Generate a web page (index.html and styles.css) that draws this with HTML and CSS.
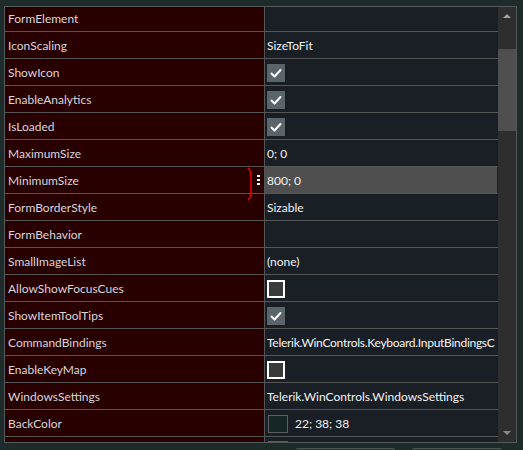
FILE: index.html
```html
<!DOCTYPE html>
<html>
<head>
<meta charset="utf-8">
<link rel="stylesheet" href="styles.css">
</head>
<body>
<div class="panel">
  <div class="grid">
    <div class="rows">
      <div class="row"><div class="name">FormElement</div><div class="value"></div></div>
      <div class="row"><div class="name">IconScaling</div><div class="value">SizeToFit</div></div>
      <div class="row"><div class="name">ShowIcon</div><div class="value"><span class="check on"><svg viewBox="0 0 18 18"><path d="M4.5 9.5 L7.5 12.5 L13.5 6" /></svg></span></div></div>
      <div class="row"><div class="name">EnableAnalytics</div><div class="value"><span class="check on"><svg viewBox="0 0 18 18"><path d="M4.5 9.5 L7.5 12.5 L13.5 6" /></svg></span></div></div>
      <div class="row"><div class="name">IsLoaded</div><div class="value"><span class="check on"><svg viewBox="0 0 18 18"><path d="M4.5 9.5 L7.5 12.5 L13.5 6" /></svg></span></div></div>
      <div class="row"><div class="name">MaximumSize</div><div class="value">0; 0</div></div>
      <div class="row selected"><div class="name">MinimumSize<span class="dots"><i></i><i></i><i></i></span><svg class="mark" viewBox="0 0 8 34"><path d="M2 1 Q5 3 5 12 L5 24 Q5 31 2 33" /></svg></div><div class="value">800; 0</div></div>
      <div class="row"><div class="name">FormBorderStyle</div><div class="value">Sizable</div></div>
      <div class="row"><div class="name">FormBehavior</div><div class="value"></div></div>
      <div class="row"><div class="name">SmallImageList</div><div class="value">(none)</div></div>
      <div class="row"><div class="name">AllowShowFocusCues</div><div class="value"><span class="check off"></span></div></div>
      <div class="row"><div class="name">ShowItemToolTips</div><div class="value"><span class="check on"><svg viewBox="0 0 18 18"><path d="M4.5 9.5 L7.5 12.5 L13.5 6" /></svg></span></div></div>
      <div class="row"><div class="name">CommandBindings</div><div class="value"><span class="clip">Telerik.WinControls.Keyboard.InputBindingsC</span></div></div>
      <div class="row"><div class="name">EnableKeyMap</div><div class="value"><span class="check off"></span></div></div>
      <div class="row"><div class="name">WindowsSettings</div><div class="value">Telerik.WinControls.WindowsSettings</div></div>
      <div class="row"><div class="name">BackColor</div><div class="value"><span class="swatch"></span><span class="swatch-text">22; 38; 38</span></div></div>
      <div class="row partial"><div class="name"></div><div class="value top"><span class="swatch light"></span></div></div>
    </div>
  </div>
  <div class="scrollbar">
    <div class="sb-btn up"><span class="arrow-up"></span></div>
    <div class="sb-thumb"></div>
    <div class="sb-track"></div>
    <div class="sb-btn down"><span class="arrow-down"></span></div>
  </div>
</div>
<div class="footer">
  <div class="btn first"></div>
  <div class="btn second"></div>
</div>
</body>
</html>
```

FILE: styles.css
```css
html, body {
  margin: 0;
  padding: 0;
}
body {
  width: 523px;
  height: 450px;
  overflow: hidden;
  background: #1d2b2b;
  font-family: "Lato", "Noto Sans", sans-serif;
  font-size: 12px;
}
.panel {
  margin: 6px 0 0 4px;
  width: 511px;
  height: 435px;
  border: 1px solid #555a5a;
  display: flex;
  background: #1a1f26;
}
.grid {
  flex: 1;
  overflow: hidden;
}
.rows {
  margin-top: -2px;
}
.row {
  display: grid;
  grid-template-columns: 260px 232px;
  grid-template-rows: 26px;
  height: 26px;
  border-bottom: 1px solid #555555;
}
.name {
  position: relative;
  height: 26px;
  box-sizing: border-box;
  padding-top: 1px;
  background: #280000;
  border-right: 1px solid #555555;
  color: #d6d6de;
  padding-left: 3px;
  line-height: 26px;
  white-space: nowrap;
}
.value {
  height: 26px;
  box-sizing: border-box;
  padding-top: 1px;
  background: #1a1f26;
  color: #f2f2f2;
  padding-left: 2px;
  line-height: 25px;
  white-space: nowrap;
  overflow: hidden;
  display: flex;
  align-items: center;
}
.value.top {
  align-items: flex-start;
  padding-top: 4px;
}
.clip {
  display: block;
  width: 229px;
  overflow: hidden;
  letter-spacing: -0.28px;
}
.row.selected .value {
  background: #4f4f4f;
}
.check {
  width: 18px;
  height: 18px;
  box-sizing: border-box;
  display: block;
}
.check.on {
  background: #5b6468;
}
.check.on svg {
  width: 18px;
  height: 18px;
  display: block;
}
.check.on path {
  fill: none;
  stroke: #ffffff;
  stroke-width: 2;
  stroke-linecap: round;
  stroke-linejoin: round;
}
.check.off {
  border: 2px solid #ffffff;
  background: #3a3a3a;
}
.swatch {
  width: 20px;
  height: 18px;
  box-sizing: border-box;
  border: 1px solid #5a5f5f;
  background: #162626;
  margin-left: 1px;
  margin-right: 7px;
  flex: none;
}
.swatch.light {
  background: #5a5a5a;
}
.dots {
  position: absolute;
  left: 252px;
  top: 8px;
  display: flex;
  flex-direction: column;
  gap: 2px;
}
.dots i {
  display: block;
  width: 3px;
  height: 2px;
  background: #ffffff;
}
.mark {
  position: absolute;
  left: 241px;
  top: 0px;
  width: 8px;
  height: 34px;
  overflow: visible;
  z-index: 2;
}
.mark path {
  fill: none;
  stroke: #e00000;
  stroke-width: 1.6;
}
.scrollbar {
  width: 18px;
  display: flex;
  flex-direction: column;
  background: #2e2e2e;
}
.sb-btn {
  height: 42px;
  position: relative;
}
.sb-btn.down {
  height: 20px;
}
.sb-thumb {
  height: 82px;
  background: #4f4f4f;
}
.sb-track {
  flex: 1;
}
.arrow-up, .arrow-down {
  position: absolute;
  left: 5px;
  width: 0;
  height: 0;
  border-left: 4px solid transparent;
  border-right: 4px solid transparent;
}
.arrow-up {
  top: 7px;
  border-bottom: 4px solid #a0a0a0;
}
.arrow-down {
  bottom: 7px;
  border-top: 4px solid #8a8a8a;
}
.footer {
  display: flex;
  gap: 17px;
  padding-left: 296px;
  margin-top: 5px;
}
.btn {
  height: 20px;
  background: #2c3838;
  border-top: 1px solid #4a5454;
  border-radius: 2px;
}
.btn.first {
  width: 99px;
}
.btn.second {
  width: 90px;
}
```
